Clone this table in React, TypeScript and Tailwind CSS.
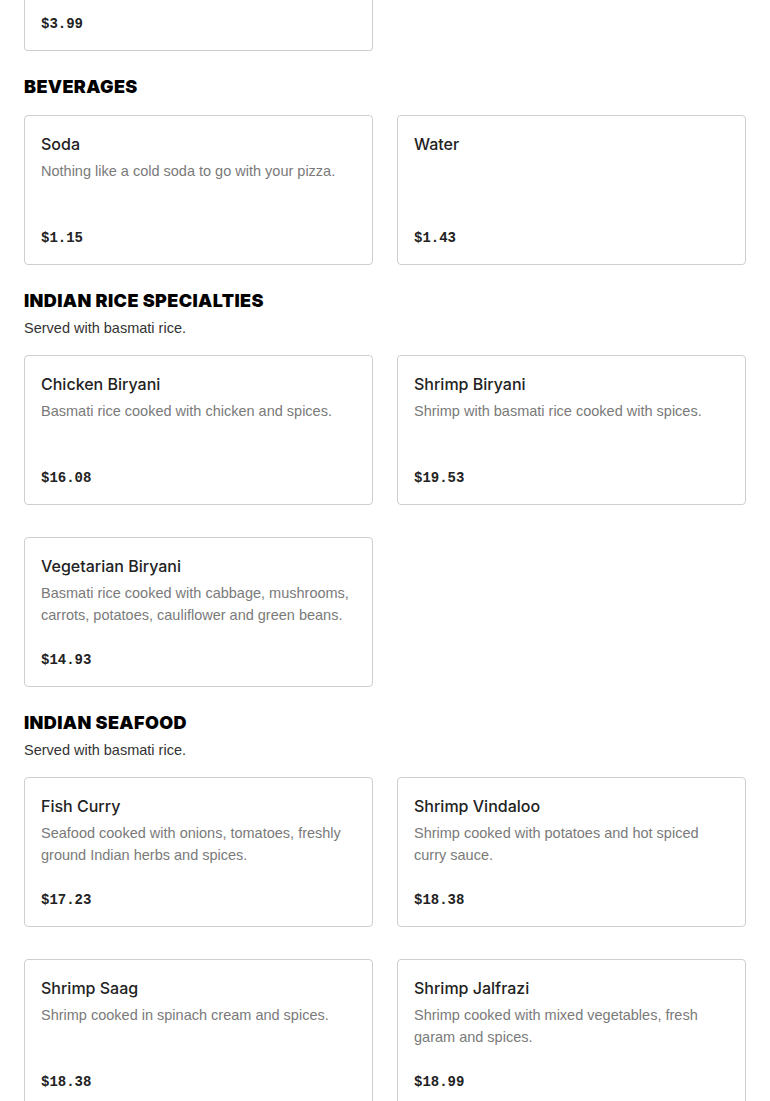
import React from 'react';

interface MenuItem {
  name: string;
  description?: string;
  price: string;
}

interface MenuSection {
  title: string;
  subtitle?: string;
  items: MenuItem[];
}

const sections: MenuSection[] = [
  {
    title: 'BEVERAGES',
    items: [
      { name: 'Soda', description: 'Nothing like a cold soda to go with your pizza.', price: '$1.15' },
      { name: 'Water', price: '$1.43' },
    ],
  },
  {
    title: 'INDIAN RICE SPECIALTIES',
    subtitle: 'Served with basmati rice.',
    items: [
      { name: 'Chicken Biryani', description: 'Basmati rice cooked with chicken and spices.', price: '$16.08' },
      { name: 'Shrimp Biryani', description: 'Shrimp with basmati rice cooked with spices.', price: '$19.53' },
      {
        name: 'Vegetarian Biryani',
        description: 'Basmati rice cooked with cabbage, mushrooms, carrots, potatoes, cauliflower and green beans.',
        price: '$14.93',
      },
    ],
  },
  {
    title: 'INDIAN SEAFOOD',
    subtitle: 'Served with basmati rice.',
    items: [
      {
        name: 'Fish Curry',
        description: 'Seafood cooked with onions, tomatoes, freshly ground Indian herbs and spices.',
        price: '$17.23',
      },
      { name: 'Shrimp Vindaloo', description: 'Shrimp cooked with potatoes and hot spiced curry sauce.', price: '$18.38' },
      { name: 'Shrimp Saag', description: 'Shrimp cooked in spinach cream and spices.', price: '$18.38' },
      { name: 'Shrimp Jalfrazi', description: 'Shrimp cooked with mixed vegetables, fresh garam and spices.', price: '$18.99' },
    ],
  },
];

const priceClass = "font-['Liberation_Mono',monospace] font-bold text-[14px] leading-[22px] text-[#222]";

const ItemCard: React.FC<{ item: MenuItem }> = ({ item }) => (
  <div className="h-[150px] flex flex-col justify-between border border-[#cfcfcf] rounded-[4px] bg-white px-4 pt-4 pb-[15px]">
    <div>
      <div className="font-['Inter',sans-serif] text-[16px] leading-6 font-medium text-[#222]">{item.name}</div>
      {item.description && (
        <p className="mt-1 text-[14.5px] leading-[22px] text-[#7a7a7a]">{item.description}</p>
      )}
    </div>
    <div className={priceClass}>{item.price}</div>
  </div>
);

const App: React.FC = () => {
  return (
    <div className="h-[1101px] overflow-hidden bg-white font-['Liberation_Sans','Noto_Sans',sans-serif]">
      <div className="px-6">
        {/* bottom of the last card of the previous section, scrolled off the top */}
        <div className="grid grid-cols-2 gap-6">
          <div className="h-[51px] flex items-end border-x border-b border-[#cfcfcf] rounded-b-[4px] px-4 pb-[15px]">
            <div className={priceClass}>$3.99</div>
          </div>
        </div>

        {sections.map((section) => (
          <section key={section.title} className="pt-[23px]">
            <h2 className="font-['Inter',sans-serif] text-[18px] leading-[26px] font-black tracking-[0.02em] text-black">
              {section.title}
            </h2>
            {section.subtitle && (
              <p className="mt-1 text-[14.5px] leading-5 text-[#333]">{section.subtitle}</p>
            )}
            <div className={`grid grid-cols-2 gap-x-6 gap-y-8 ${section.subtitle ? 'mt-[17px]' : 'mt-[15px]'}`}>
              {section.items.map((item) => (
                <ItemCard key={item.name} item={item} />
              ))}
            </div>
          </section>
        ))}
      </div>
    </div>
  );
};

export default App;
